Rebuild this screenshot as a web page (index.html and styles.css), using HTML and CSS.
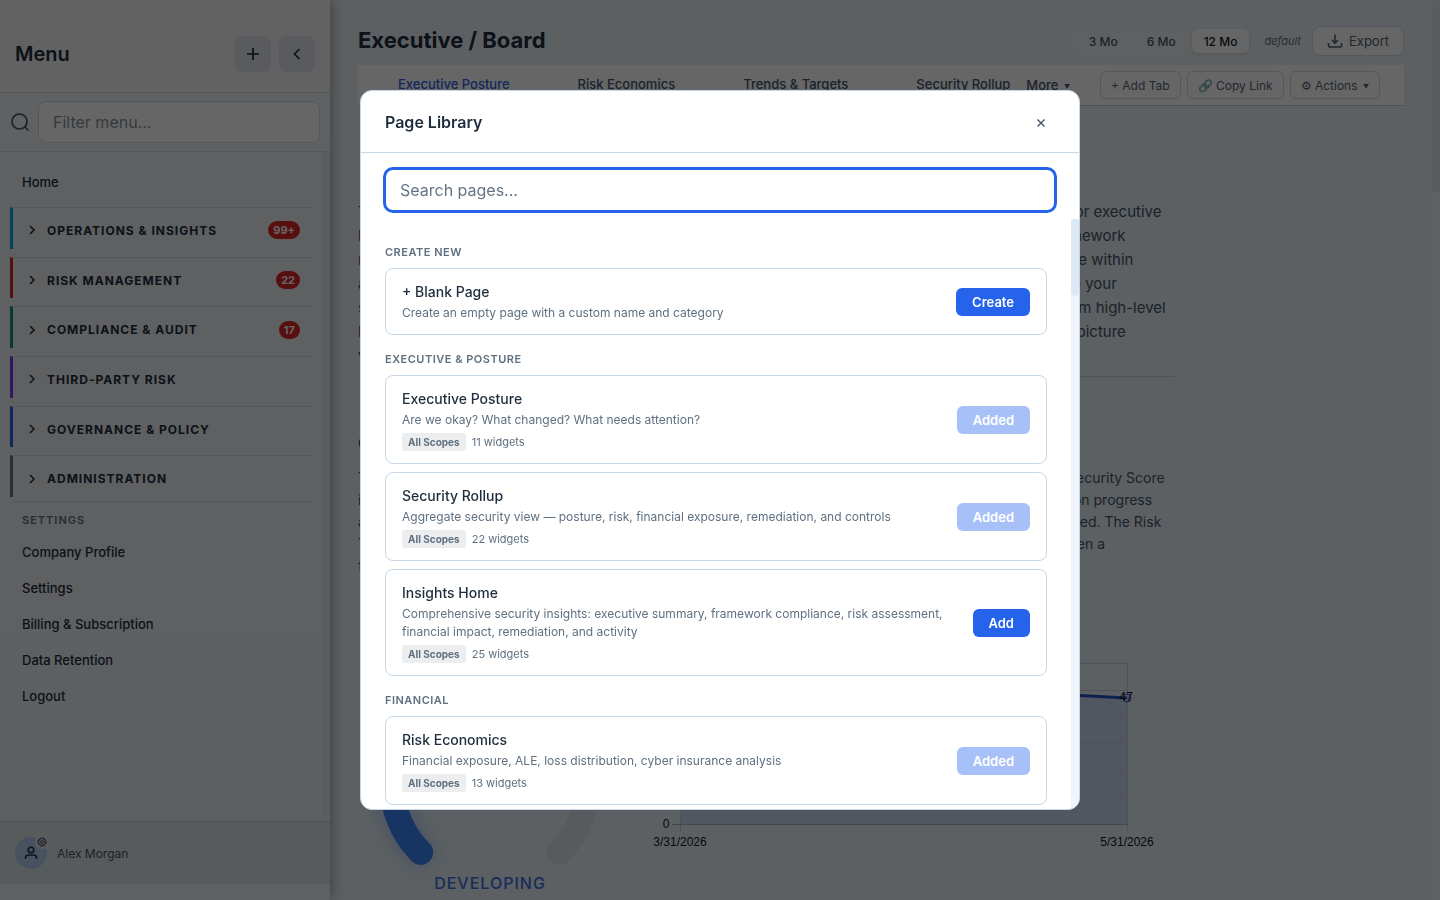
FILE: index.html
```html
<!DOCTYPE html>
<html lang="en">
<head>
<meta charset="utf-8">
<title>Executive / Board</title>
<link rel="stylesheet" href="styles.css">
</head>
<body>
<div class="app">
  <aside class="sidebar">
    <header class="side-head">
      <h2 class="side-title">Menu</h2>
      <button class="square-btn" aria-label="Add"><svg width="20" height="20" viewBox="0 0 20 20"><path d="M10 4v12M4 10h12"/></svg></button>
      <button class="square-btn" aria-label="Collapse"><svg width="20" height="20" viewBox="0 0 20 20"><path d="M12.500 5l-5 5 5 5"/></svg></button>
    </header>
    <div class="side-filter">
      <svg class="search-icon" width="20" height="20" viewBox="0 0 20 20"><circle cx="9.500" cy="9.500" r="7.500"/><path d="M15 15l3.500 3.500"/></svg>
      <input class="filter-input" type="text" placeholder="Filter menu..." aria-label="Filter menu">
    </div>
    <div class="side-scroll">
      <nav class="side-nav">
        <a class="nav-link" href="#">Home</a>
        <div class="groups">
          <button class="group sky"><svg class="chev" viewBox="0 0 10 10"><path d="M3 1l4 4-4 4"/></svg><span class="group-name">OPERATIONS &amp; INSIGHTS</span><span class="count">99+</span></button>
          <button class="group red"><svg class="chev" viewBox="0 0 10 10"><path d="M3 1l4 4-4 4"/></svg><span class="group-name">RISK MANAGEMENT</span><span class="count">22</span></button>
          <button class="group green"><svg class="chev" viewBox="0 0 10 10"><path d="M3 1l4 4-4 4"/></svg><span class="group-name">COMPLIANCE &amp; AUDIT</span><span class="count">17</span></button>
          <button class="group violet"><svg class="chev" viewBox="0 0 10 10"><path d="M3 1l4 4-4 4"/></svg><span class="group-name">THIRD-PARTY RISK</span></button>
          <button class="group blue"><svg class="chev" viewBox="0 0 10 10"><path d="M3 1l4 4-4 4"/></svg><span class="group-name">GOVERNANCE &amp; POLICY</span></button>
          <button class="group slate"><svg class="chev" viewBox="0 0 10 10"><path d="M3 1l4 4-4 4"/></svg><span class="group-name">ADMINISTRATION</span></button>
        </div>
        <h3 class="nav-label">SETTINGS</h3>
        <a class="nav-link" href="#">Company Profile</a>
        <a class="nav-link" href="#">Settings</a>
        <a class="nav-link" href="#">Billing &amp; Subscription</a>
        <a class="nav-link" href="#">Data Retention</a>
        <a class="nav-link" href="#">Logout</a>
      </nav>
      <div class="side-bar"></div>
    </div>
    <footer class="side-foot">
      <span class="avatar">
        <svg width="16" height="16" viewBox="0 0 16 16"><circle cx="8" cy="5" r="2.800"/><path d="M2.500 14v-1a3 3 0 0 1 3-3h5a3 3 0 0 1 3 3v1"/></svg>
        <span class="avatar-gear"><svg width="10" height="10" viewBox="0 0 10 10"><circle cx="5" cy="5" r="4.200" stroke-dasharray="2.300 1"/><circle cx="5" cy="5" r="3.500"/><circle cx="5" cy="5" r="1.500"/></svg></span>
      </span>
      <span class="user-name">Alex Morgan</span>
    </footer>
  </aside>

  <main class="main">
    <div class="top-row">
      <h1 class="page-title">Executive / Board</h1>
      <div class="range">
        <button class="range-btn">3 Mo</button>
        <button class="range-btn">6 Mo</button>
        <button class="range-btn active">12 Mo</button>
      </div>
      <em class="default">default</em>
      <button class="export"><svg width="16" height="16" viewBox="0 0 16 16"><path d="M8 1.500v8M5 7l3 3 3-3M1.500 10v2.500a1.500 1.500 0 0 0 1.500 1.500h10a1.500 1.500 0 0 0 1.500-1.500V10"/></svg>Export</button>
    </div>
    <div class="tabs">
      <a class="tab current" href="#">Executive Posture</a>
      <a class="tab" href="#">Risk Economics</a>
      <a class="tab" href="#">Trends &amp; Targets</a>
      <a class="tab" href="#">Security Rollup</a>
      <button class="more">More <span class="caret">▼</span></button>
      <button class="tool">+ Add Tab</button>
      <button class="tool">🔗 Copy Link</button>
      <button class="tool">⚙ Actions <span class="caret">▼</span></button>
    </div>
    <section class="story">
      <p class="intro">This page brings your security posture, compliance and financial exposure together in just one view for executive<br>leaders and board members. Scores are calculated from control evidence that is mapped to each framework<br>requirement, these are updated whenever new findings arrive, so that the numbers always stay reliable within<br>a reporting period. Just use the time range control to compare results across several quarters and see your<br>security trend, then open any of the tabs above for the supporting detail, which will take you down from high-level<br>logic to specific findings and remediation work. Together these pages give our decision makers a full picture<br>view of risk.</p>
      <h2 class="story-title">Overview</h2>
      <p class="detail">The gauge below shows the current company posture score, and the chart beside it shows how the overall Security Score<br>is changing over the full selected period. Review both of these measures together to see the latest remediation progress<br>and to find the areas where further investment in controls and in additional compliance staff may still be needed. The Risk<br>Trend is calculated from open findings and this highlights any material changes that recently occurred between a<br>first and last day.</p>
    </section>
    <section class="charts">
      <figure class="gauge">
        <svg width="264" height="230" viewBox="0 0 264 230">
          <path class="gauge-rest" d="M132 15a98 98 0 0 1 69.300 167.300"/>
          <path class="gauge-value" d="M62.700 182.300A98 98 0 0 1 132 15"/>
        </svg>
        <figcaption class="gauge-label">DEVELOPING</figcaption>
      </figure>
      <svg class="trend" width="532" height="200" viewBox="0 0 532 200">
        <path class="trend-area" d="M58 20L505 43V169H58z"/>
        <path class="grid" d="M50 8.500h455.500M50 35.500h455.500M50 62.500h455.500M50 88.500h455.500M50 115.500h455.500M50 142.500h455.500M58.500 8v169M505.500 8v169"/>
        <path class="axis" d="M50 169.500h455.500"/>
        <path class="trend-line" d="M58 20L458 40.500 505 43"/>
        <circle class="trend-dot" cx="505" cy="43" r="4"/>
        <g class="chart-text"><text x="504" y="46">47</text><text x="44" y="173">0</text><text x="58" y="191">3/31/2026</text><text x="505" y="191">5/31/2026</text></g>
      </svg>
    </section>
  </main>
  <div class="page-bar"><div class="page-thumb"></div></div>
</div>

<div class="overlay">
  <div class="modal" role="dialog" aria-label="Page Library">
    <header class="modal-head">
      <h2 class="modal-title">Page Library</h2>
      <button class="close" aria-label="Close"><svg width="10" height="10" viewBox="0 0 10 10"><path d="M1.500 1.500l7 7M8.500 1.500l-7 7"/></svg></button>
    </header>
    <div class="search-row"><input class="search" type="text" placeholder="Search pages..." aria-label="Search pages"></div>
    <div class="modal-body">
      <div class="list">
        <h3 class="list-label">CREATE NEW</h3>
        <article class="card">
          <div class="info"><h4 class="card-title">+ Blank Page</h4><p class="desc">Create an empty page with a custom name and category</p></div>
          <button class="action">Create</button>
        </article>
        <h3 class="list-label">EXECUTIVE &amp; POSTURE</h3>
        <article class="card">
          <div class="info"><h4 class="card-title">Executive Posture</h4><p class="desc">Are we okay? What changed? What needs attention?</p><div class="meta"><span class="scope">All Scopes</span>11 widgets</div></div>
          <button class="action" disabled>Added</button>
        </article>
        <article class="card">
          <div class="info"><h4 class="card-title">Security Rollup</h4><p class="desc">Aggregate security view — posture, risk, financial exposure, remediation, and controls</p><div class="meta"><span class="scope">All Scopes</span>22 widgets</div></div>
          <button class="action" disabled>Added</button>
        </article>
        <article class="card">
          <div class="info"><h4 class="card-title">Insights Home</h4><p class="desc">Comprehensive security insights: executive summary, framework compliance, risk assessment, financial impact, remediation, and activity</p><div class="meta"><span class="scope">All Scopes</span>25 widgets</div></div>
          <button class="action">Add</button>
        </article>
        <h3 class="list-label">FINANCIAL</h3>
        <article class="card">
          <div class="info"><h4 class="card-title">Risk Economics</h4><p class="desc">Financial exposure, ALE, loss distribution, cyber insurance analysis</p><div class="meta"><span class="scope">All Scopes</span>13 widgets</div></div>
          <button class="action" disabled>Added</button>
        </article>
      </div>
      <div class="list-bar"><div class="list-thumb"></div></div>
    </div>
  </div>
</div>
</body>
</html>
```
FILE: styles.css
```css
* { box-sizing: border-box; margin: 0; padding: 0; }
body { font-family: Inter, "Liberation Sans", sans-serif; color: #1e2d3d; background: #e7f0f4; overflow: hidden; }
button, input { font: inherit; color: inherit; border: 0; background: none; }
a { color: inherit; text-decoration: none; }
svg { fill: none; stroke: currentColor; stroke-width: 2; flex: none; }
.app { display: flex; height: 100vh; overflow: hidden; }

.sidebar { flex: none; width: 330px; display: flex; flex-direction: column; padding-bottom: 16px; background: linear-gradient(#f5f6f8, #ebf0f4 20%, #ecf0f5 50%, #e8eff3 85%, #ebf0f3); box-shadow: 2px 0 12px rgba(0, 0, 0, .3); z-index: 1; }
.side-head { display: flex; align-items: center; gap: 8px; padding: 36px 15px 20px; border-bottom: 1px solid #cfd5da; background: #f4f5f8; }
.side-title { flex: 1; font-size: 20px; font-weight: 600; line-height: 24px; }
.square-btn { width: 36px; height: 36px; border-radius: 8px; background: #e2e4ea; display: grid; place-items: center; }
.square-btn svg { stroke-width: 1.7; }
.side-filter { display: flex; align-items: center; gap: 8px; padding: 8px 10px; border-bottom: 1px solid #cfd5da; }
.search-icon { color: #475569; stroke-width: 1.7; }
.filter-input { flex: 1; min-width: 0; height: 42px; padding: 0 14px; border: 1px solid #cbd9e8; border-radius: 8px; background: #fff; font-size: 16px; }
.filter-input::placeholder { color: #8b929c; }
.side-scroll { flex: 1; min-height: 0; display: flex; }
.side-nav { flex: 1; display: flex; flex-direction: column; padding: 12px 10px; }
.side-bar { width: 8px; margin-bottom: 4px; border-radius: 4px; background: #e0e8f0; }
.nav-link { padding: 0 12px; font-size: 13px; font-weight: 500; line-height: 36px; }
.groups { display: flex; flex-direction: column; gap: 8px; height: 290px; margin: 7px 0 4px; }
.group { flex: 1; display: flex; align-items: center; gap: 10px; padding: 4px 12px 0 14px; border-top: 1px solid #d5dadf; border-left: 3px solid; text-align: left; }
.chev { width: 10px; height: 10px; color: #1e2d3d; stroke-width: 1.5; }
.group-name { flex: 1; color: #1e2d3d; font-size: 12px; font-weight: 700; letter-spacing: 1px; }
.count { height: 18px; padding: 0 5px; border-radius: 9px; background: #dc2626; color: #fff; font-size: 11px; font-weight: 700; line-height: 18px; }
.sky { border-left-color: #0ea5e9; }
.red { border-left-color: #dc2626; }
.green { border-left-color: #059669; }
.violet { border-left-color: #7c3aed; }
.blue { border-left-color: #2563eb; }
.slate { border-left-color: #64748b; }
.nav-label { padding: 10px 12px 6px; border-top: 1px solid #d5dadf; color: #5f7081; font-size: 11px; font-weight: 600; line-height: 16px; letter-spacing: 1px; }
.side-foot { display: flex; align-items: center; gap: 10px; height: 63px; padding: 0 15px; border-top: 1px solid #c4ccd1; background: #dde3e6; }
.avatar { position: relative; width: 32px; height: 32px; border-radius: 50%; background: #b4cbf0; display: grid; place-items: center; }
.avatar svg { stroke-width: 1.6; }
.avatar-gear { position: absolute; top: -2px; right: -2px; width: 14px; height: 14px; border-radius: 50%; background: #e2e5e8; display: grid; place-items: center; color: #475569; }
.avatar-gear svg { stroke-width: 1; }
.user-name { font-size: 12px; color: #475569; }

.main { flex: 1; min-width: 0; padding: 26px 28px 0; }
.top-row { display: flex; align-items: center; height: 30px; }
.page-title { flex: 1; font-size: 22px; font-weight: 700; line-height: 28px; padding-bottom: 2px; }
.range { display: flex; gap: 3px; padding: 2px; border-radius: 8px; background: #eaf0f3; }
.range-btn { height: 24px; padding: 0 13px; border-radius: 6px; font-size: 12px; font-weight: 500; color: #475569; }
.range-btn.active { padding: 0 12px; background: #fff; color: #0f172a; box-shadow: 0 1px 3px rgba(0, 0, 0, .15); }
.default { margin: 0 11px 0 13px; font-size: 11px; color: #64748b; }
.export { display: flex; align-items: center; gap: 6px; height: 30px; padding: 0 14px; border: 1px solid #cbd9e8; border-radius: 8px; background: #fff; color: #566577; font-size: 13px; }
.export svg { stroke-width: 1.6; }
.tabs { display: flex; align-items: center; height: 41px; margin-top: 9px; padding: 0 24px 0 40px; border-bottom: 1px solid #c0ccd6; background: #fff; font-size: 13px; font-weight: 500; color: #475569; }
.tab { margin-right: 68px; padding-bottom: 2px; white-space: nowrap; }
.tab:nth-child(4) { margin-right: 16px; }
.tab.current { color: #2f5fe8; }
.more { flex: 1; text-align: left; }
.caret { font-size: 6px; vertical-align: 1px; margin-left: 2px; }
.tool { height: 28px; margin-left: 6px; padding: 0 10px; border: 1px solid #cbd9e8; border-radius: 6px; color: #566577; font-size: 12px; font-weight: 400; white-space: nowrap; }
.story { max-width: 816px; padding-top: 94px; color: #475569; white-space: nowrap; }
.intro { font-size: 15px; line-height: 24px; padding-bottom: 8px; border-bottom: 1px solid #c8d2da; }
.story-title { margin: 54px 0 12px; font-size: 16px; line-height: 24px; }
.detail { font-size: 14px; line-height: 22px; }
.charts { display: flex; padding-top: 78px; }
.gauge { position: relative; }
.gauge svg { display: block; margin-top: 15px; stroke-width: 25; stroke-linecap: round; overflow: visible; }
.gauge-value { stroke: #3b82f6; filter: drop-shadow(0 0 10px rgba(59, 130, 246, .4)); }
.gauge-rest { stroke: #dce4e9; }
.gauge-label { margin-top: -27px; text-align: center; font-size: 16px; font-weight: 500; letter-spacing: 1px; color: #3b6fe0; }
.trend { overflow: visible; }
.trend-area { fill: #cbdaf2; stroke: none; }
.grid { stroke: #c5ced6; stroke-width: 1; }
.axis { stroke: #a8b2ba; stroke-width: 1; }
.trend-line { stroke: #2452c4; stroke-width: 3; }
.trend-dot { stroke: #2452c4; stroke-width: 1; }
.chart-text { fill: #0f1a28; stroke: none; font: 12px "Liberation Sans", sans-serif; text-anchor: middle; }
.page-bar { width: 8px; background: #eceff2; z-index: 1; }
.page-thumb { height: 193px; border-radius: 4px; background: #dfe8ee; }

.overlay { position: fixed; inset: 0; display: grid; place-items: center; background: rgba(0, 0, 0, .6); z-index: 5; }
.modal { width: 50%; min-width: 600px; height: 80vh; display: flex; flex-direction: column; overflow: hidden; border: 1px solid #c7d7e7; border-radius: 12px; background: #fff; }
.modal-head { display: flex; align-items: center; justify-content: space-between; padding: 17px 24px 15px; border-bottom: 1px solid #c7d7e7; }
.modal-title { font-size: 16px; font-weight: 600; line-height: 29px; }
.close { width: 28px; height: 28px; display: grid; place-items: center; color: #475569; }
.close svg { stroke-width: 1.4; }
.search-row { padding: 14px 22px 6px; }
.search { display: block; width: 100%; height: 46px; padding: 0 14px; border: 3px solid #2563eb; border-radius: 10px; outline: 0; font-size: 16px; }
.search::placeholder { color: #647486; }
.modal-body { flex: 1; min-height: 0; display: flex; }
.list { flex: 1; min-width: 0; overflow: hidden; padding: 9px 24px; }
.list-label { padding: 16px 0 8px; font-size: 11px; font-weight: 600; line-height: 16px; letter-spacing: .5px; color: #5f7081; }
.card { display: flex; align-items: center; gap: 16px; padding: 12px 16px; border: 1px solid #c7d7e7; border-radius: 8px; }
.card + .card { margin-top: 8px; }
.info { flex: 1; min-width: 0; }
.card-title { font-size: 14px; font-weight: 500; line-height: 21px; }
.desc { margin-top: 2px; font-size: 12px; line-height: 18px; color: #5f7081; }
.meta { display: flex; align-items: center; gap: 6px; margin-top: 4px; font-size: 11px; line-height: 18px; color: #5f7081; }
.scope { padding: 0 6px; border-radius: 3px; background: #ecedef; font-size: 10px; font-weight: 700; }
.action { height: 28px; padding: 0 16px; border-radius: 6px; background: #2563eb; color: #fff; font-size: 13px; font-weight: 600; }
.action:disabled { opacity: .4; }
.list-bar { width: 8px; background: #eff5fa; }
.list-thumb { height: 13%; border-radius: 4px; background: #dce8f4; }
```
